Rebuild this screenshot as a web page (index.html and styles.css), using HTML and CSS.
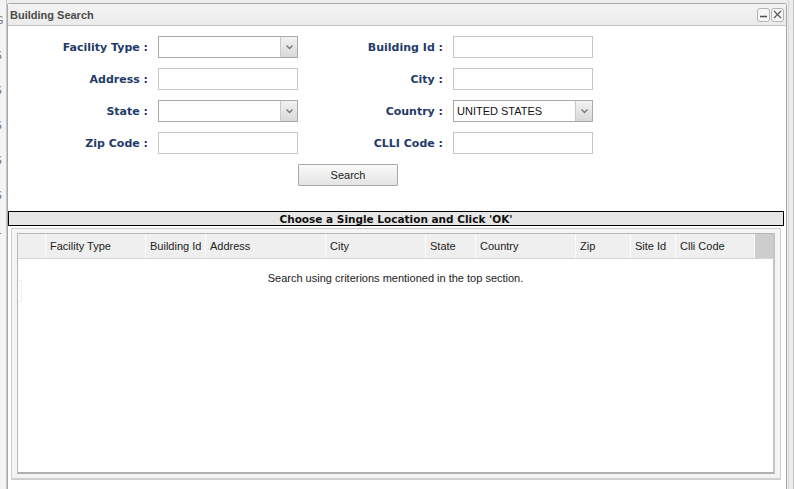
FILE: index.html
```html
<!DOCTYPE html>
<html>
<head>
<meta charset="utf-8">
<link rel="stylesheet" href="styles.css">
</head>
<body>
<div class="page">
  <div class="backdrop-edge">
    <span>G</span><span>S</span><span>S</span><span>S</span><span>S</span><span>S</span><span>1</span><span>:</span>
  </div>
  <div class="dialog">
    <div class="titlebar">
      <span class="title">Building Search</span>
      <div class="tools">
        <span class="tool"><svg width="11" height="11" viewBox="0 0 11 11"><path d="M2 7.5h7" stroke="#555" stroke-width="1.6"/></svg></span>
        <span class="tool"><svg width="11" height="11" viewBox="0 0 11 11"><path d="M2 2l7 7M9 2l-7 7" stroke="#555" stroke-width="1.1"/></svg></span>
      </div>
    </div>
    <div class="content">
      <div class="form">
        <label class="lbl">Facility Type :</label>
        <div class="select"><span class="val"></span><span class="drop"><svg width="9" height="6" viewBox="0 0 9 6"><path d="M1.5 1.5l3 3 3-3" fill="none" stroke="#777" stroke-width="1.3"/></svg></span></div>
        <label class="lbl">Building Id :</label>
        <div class="input"></div>

        <label class="lbl">Address :</label>
        <div class="input"></div>
        <label class="lbl">City :</label>
        <div class="input"></div>

        <label class="lbl">State :</label>
        <div class="select"><span class="val"></span><span class="drop"><svg width="9" height="6" viewBox="0 0 9 6"><path d="M1.5 1.5l3 3 3-3" fill="none" stroke="#777" stroke-width="1.3"/></svg></span></div>
        <label class="lbl">Country :</label>
        <div class="select"><span class="val">UNITED STATES</span><span class="drop"><svg width="9" height="6" viewBox="0 0 9 6"><path d="M1.5 1.5l3 3 3-3" fill="none" stroke="#777" stroke-width="1.3"/></svg></span></div>

        <label class="lbl">Zip Code :</label>
        <div class="input"></div>
        <label class="lbl">CLLI Code :</label>
        <div class="input"></div>
      </div>
      <div class="btnrow"><button class="btn">Search</button></div>
      <div class="caption">Choose a Single Location and Click 'OK'</div>
      <div class="gridframe">
        <div class="grid">
          <div class="ghead">
            <div class="hc c0"></div>
            <div class="hc c1">Facility Type</div>
            <div class="hc c2">Building Id</div>
            <div class="hc c3">Address</div>
            <div class="hc c4">City</div>
            <div class="hc c5">State</div>
            <div class="hc c6">Country</div>
            <div class="hc c7">Zip</div>
            <div class="hc c8">Site Id</div>
            <div class="hc c9">Clli Code</div>
            <div class="hc scroll"></div>
          </div>
          <div class="gbody">
            <div class="ghost"></div>
            <p class="msg">Search using criterions mentioned in the top section.</p>
          </div>
        </div>
      </div>
    </div>
  </div>
  <div class="backdrop-right"></div>
</div>
</body>
</html>
```

FILE: styles.css
```css
* { box-sizing: border-box; }
html, body { margin: 0; padding: 0; }
body {
  width: 794px;
  height: 489px;
  overflow: hidden;
  background: #ededed;
  font-family: "Liberation Sans", Arial, sans-serif;
  font-size: 11px;
  color: #222;
}
.page {
  display: flex;
  height: 489px;
}
.backdrop-edge {
  width: 7px;
  padding-top: 14px;
  border-right: 1px solid #c8c8c8;
  background: #f4f4f4;
  display: flex;
  flex-direction: column;
  gap: 22px;
  overflow: hidden;
  font-family: "DejaVu Sans", Verdana, sans-serif;
  font-size: 11px;
  color: #777;
  text-indent: -5px;
  white-space: nowrap;
}
.dialog {
  width: 780px;
  margin-top: 3px;
  border: 1px solid #a8a8a8;
  border-bottom: none;
  border-radius: 3px 3px 0 0;
  background: #fff;
  display: flex;
  flex-direction: column;
}
.backdrop-right {
  width: 6px;
  background: #ececec;
  border-left: 1px solid #d8d8d8;
  border-right: 1px solid #c4c4c4;
  margin-left: 1px;
}
.titlebar {
  height: 22px;
  background: linear-gradient(#f3f3f3, #ebebeb);
  border-bottom: 1px solid #c4c4c4;
  display: flex;
  align-items: center;
  justify-content: space-between;
  padding: 0 2px 0 2px;
}
.title {
  font-family: "Liberation Sans", Arial, sans-serif;
  font-weight: bold;
  font-size: 11px;
  color: #4a4a4a;
}
.tools { display: flex; gap: 1px; }
.tool {
  width: 13px;
  height: 14px;
  border: 1px solid #b4b4b4;
  border-radius: 3px;
  background: #f6f6f6;
  display: flex;
  align-items: center;
  justify-content: center;
}
.content {
  flex: 1;
  display: flex;
  flex-direction: column;
}
.form {
  display: grid;
  grid-template-columns: 140px 140px 135px 140px;
  column-gap: 10px;
  row-gap: 10px;
  grid-auto-rows: 22px;
  padding-top: 10px;
}
.lbl {
  font-family: "DejaVu Sans", Verdana, sans-serif;
  font-weight: bold;
  font-size: 11px;
  color: #1f3b69;
  text-align: right;
  align-self: center;
}
.input {
  height: 22px;
  border: 1px solid #c6c6c6;
  background: #fff;
}
.select {
  height: 22px;
  border: 1px solid #a9a9a9;
  background: #fff;
  display: flex;
  align-items: stretch;
}
.select .val {
  flex: 1;
  padding-left: 3px;
  line-height: 20px;
  font-size: 11px;
  color: #111;
}
.select .drop {
  width: 17px;
  border-left: 1px solid #c8c8c8;
  background: linear-gradient(#f2f2f2, #d8d8d8);
  display: flex;
  align-items: center;
  justify-content: center;
}
.btnrow {
  padding-left: 290px;
  margin-top: 10px;
}
.btn {
  width: 100px;
  height: 22px;
  border: 1px solid #a8a8a8;
  border-radius: 1px;
  background: linear-gradient(#fafafa, #e4e4e4);
  font-family: "Liberation Sans", Arial, sans-serif;
  font-size: 11px;
  color: #222;
  padding: 0;
}
.caption {
  margin-top: 25px;
  width: 776px;
  height: 15px;
  border: 1px solid #000;
  background: #e6e6e6;
  font-family: "DejaVu Sans", Verdana, sans-serif;
  font-weight: bold;
  font-size: 10.5px;
  line-height: 14px;
  text-align: center;
  color: #111;
}
.gridframe {
  margin-top: 2px;
  margin-left: 3px;
  width: 770px;
  height: 252px;
  border: 1px solid #cfcfcf;
  border-bottom: 2px solid #cfcfcf;
  padding: 4px 5px 4px 5px;
  background: #f4f4f4;
}
.grid {
  height: 100%;
  border: 1px solid #a8a8a8;
  border-width: 1px 2px 2px 1px;
  border-color: #b8b8b8 #c4c4c4 #b0b0b0 #b8b8b8;
  background: #fff;
  display: flex;
  flex-direction: column;
}
.ghead {
  display: flex;
  height: 25px;
  background: #efefef;
  border-bottom: 1px solid #d4d4d4;
}
.hc {
  padding-left: 4px;
  padding-top: 1px;
  line-height: 23px;
  border-right: 1px solid #fbfbfb;
  font-size: 11px;
  color: #222;
  white-space: nowrap;
}
.c0 { width: 28px; }
.c1 { width: 100px; }
.c2 { width: 60px; }
.c3 { width: 120px; }
.c4 { width: 100px; }
.c5 { width: 50px; }
.c6 { width: 100px; }
.c7 { width: 55px; }
.c8 { width: 45px; }
.c9 { width: 79px; }
.scroll { flex: 1; background: #cdcdcd; border-right: none; }
.gbody {
  flex: 1;
  position: relative;
}
.ghost {
  position: absolute;
  left: 0;
  top: 21px;
  width: 4px;
  height: 22px;
  border: 1px solid #f0f0f0;
  border-left: none;
}
.msg {
  margin: 13px 0 0;
  text-align: center;
  font-size: 11px;
  color: #222;
}
```
